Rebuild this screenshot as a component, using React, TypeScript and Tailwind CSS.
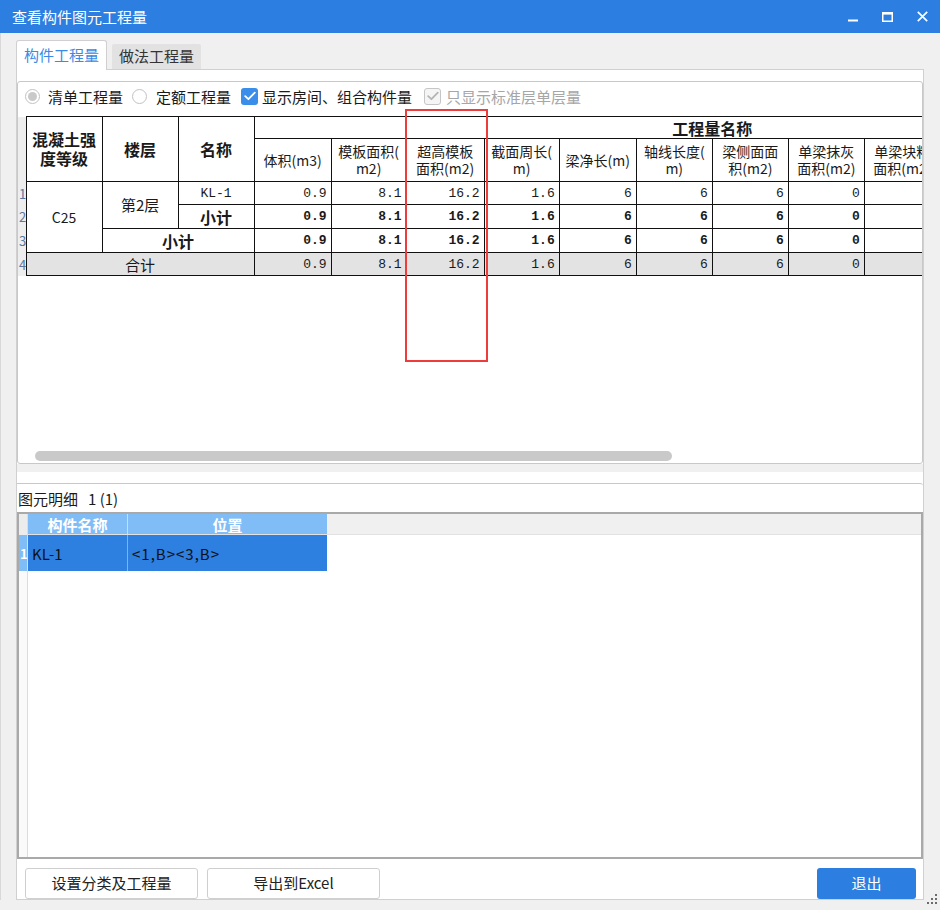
import React from 'react';

type Col = { w: string; head: string[] };

// columns under 工程量名称 (the last three sit beyond the visible edge)
const qtyCols: Col[] = [
    { w: 'w-[77px]', head: ['体积(m3)'] },
    { w: 'w-[75px]', head: ['模板面积(', 'm2)'] },
    { w: 'w-[78px]', head: ['超高模板', '面积(m2)'] },
    { w: 'w-[75px]', head: ['截面周长(', 'm)'] },
    { w: 'w-[77px]', head: ['梁净长(m)'] },
    { w: 'w-[76px]', head: ['轴线长度(', 'm)'] },
    { w: 'w-[76px]', head: ['梁侧面面', '积(m2)'] },
    { w: 'w-[76px]', head: ['单梁抹灰', '面积(m2)'] },
    { w: 'w-[76px]', head: ['单梁块料', '面积(m2)'] },
    { w: 'w-[77px]', head: ['单梁块料', '厚度(m)'] },
    { w: 'w-[76px]', head: ['梁侧模板', '面积(m2)'] },
    { w: 'w-[77px]', head: ['梁底模板', '面积(m2)'] },
];

const values = ['0.9', '8.1', '16.2', '1.6', '6', '6', '6', '0', '', '', '', ''];

const cell = 'border border-[#111] p-0';
const rowNum = 'p-0 bg-[#eeeeee] text-[13px] leading-none text-[#5877a3] text-left pl-[1px] align-middle';

const ValueCells: React.FC<{ bold?: boolean }> = ({ bold }) => (
    <>
        {values.map((v, i) => (
            <td
                key={i}
                className={`${cell} text-right pr-[4px] font-['Liberation_Mono',monospace] text-[13px] leading-none ${bold ? 'font-bold' : ''}`}
            >
                {v}
            </td>
        ))}
    </>
);

const Radio: React.FC<{ checked?: boolean }> = ({ checked }) => (
    <span className="w-[15px] h-[15px] rounded-full border border-[#c2c2c2] bg-white flex items-center justify-center shrink-0">
        {checked && <span className="w-[9px] h-[9px] rounded-full bg-[#c9c9c9]" />}
    </span>
);

const Check: React.FC<{ disabled?: boolean }> = ({ disabled }) => (
    <span
        className={`w-[17px] h-[17px] rounded-[3px] flex items-center justify-center shrink-0 ${
            disabled ? 'border border-[#c6c6c6] bg-[#f5f5f5]' : 'bg-[#3a8de8]'
        }`}
    >
        <svg width="12" height="10" viewBox="0 0 12 10" fill="none">
            <path
                d="M1.2 5.2 L4.4 8.2 L10.8 1.6"
                stroke={disabled ? '#b5b5b5' : '#ffffff'}
                strokeWidth="1.8"
                strokeLinecap="round"
                strokeLinejoin="round"
            />
        </svg>
    </span>
);

export default function App() {
    return (
        <div className="relative w-[940px] h-[910px] overflow-hidden bg-[#f0f0f0] font-['Noto_Sans_CJK_SC',sans-serif] text-[#1a1a1a]">
            <header className="h-[33px] bg-[#2c7fe0] flex items-center justify-between pl-[12px] text-white">
                <span className="text-[15px] leading-none">查看构件图元工程量</span>
                <div className="flex h-full">
                    <button type="button" className="w-[35px] h-full flex items-center justify-center" title="最小化">
                        <svg width="10" height="10" viewBox="0 0 10 10"><rect x="0" y="7.5" width="10" height="2" fill="#fff" /></svg>
                    </button>
                    <button type="button" className="w-[35px] h-full flex items-center justify-center" title="最大化">
                        <svg width="11" height="10" viewBox="0 0 11 10" fill="none">
                            <rect x="0.75" y="0.75" width="9.5" height="8.5" stroke="#fff" strokeWidth="1.5" />
                            <rect x="0" y="0" width="11" height="2.6" fill="#fff" />
                        </svg>
                    </button>
                    <button type="button" className="w-[35px] h-full flex items-center justify-center" title="关闭">
                        <svg width="11" height="11" viewBox="0 0 11 11" fill="none">
                            <path d="M0.8 0.8 L10.2 10.2 M10.2 0.8 L0.8 10.2" stroke="#fff" strokeWidth="1.7" />
                        </svg>
                    </button>
                </div>
            </header>

            <div className="flex flex-col pl-[15px] pr-[16px] pt-[7px] border-l border-[#d8d8d8]">
                {/* tabs */}
                <div className="flex items-end h-[29px]">
                    <div className="relative z-10 -mb-px h-[30px] w-[91px] bg-white border border-b-0 border-[#d0d0d0] rounded-t-[3px] flex items-center justify-center text-[15px] text-[#3a8ae6]">
                        构件工程量
                    </div>
                    <div className="ml-[5px] h-[25px] w-[89px] bg-[#e2e2e2] rounded-t-[2px] flex items-center justify-center text-[15px] text-[#333]">
                        做法工程量
                    </div>
                </div>

                <div className="h-[831px] bg-white border border-[#d0d0d0] flex flex-col pt-[11px]">
                    {/* upper: quantities table */}
                    <div className="h-[383px] border border-[#c8c8c8] rounded-[3px] flex flex-col overflow-hidden">
                        <div className="h-[28px] flex items-center pl-[7px] text-[15px] leading-none">
                            <Radio checked />
                            <span className="ml-[8px]">清单工程量</span>
                            <span className="ml-[9px]"><Radio /></span>
                            <span className="ml-[9px]">定额工程量</span>
                            <span className="ml-[10px]"><Check /></span>
                            <span className="ml-[4px]">显示房间、组合构件量</span>
                            <span className="ml-[12px]"><Check disabled /></span>
                            <span className="ml-[5px] text-[#a6a6a6]">只显示标准层单层量</span>
                        </div>

                        <div className="mt-[6px] overflow-hidden">
                            <table className="table-fixed border-collapse w-[1153px] text-center">
                                <colgroup>
                                    <col className="w-[8px]" />
                                    <col className="w-[76px]" />
                                    <col className="w-[76px]" />
                                    <col className="w-[76px]" />
                                    {qtyCols.map((c, i) => (
                                        <col key={i} className={c.w} />
                                    ))}
                                </colgroup>
                                <thead>
                                    <tr className="h-[22px]">
                                        <th rowSpan={2} className="p-0 bg-[#eeeeee]" />
                                        <th rowSpan={2} className={`${cell} text-[16px] leading-[19px] font-bold`}>
                                            混凝土强<br />度等级
                                        </th>
                                        <th rowSpan={2} className={`${cell} text-[16px] leading-none font-bold`}>楼层</th>
                                        <th rowSpan={2} className={`${cell} text-[16px] leading-none font-bold`}>名称</th>
                                        <th colSpan={qtyCols.length} className={`${cell} text-[16px] leading-none font-bold`}>
                                            工程量名称
                                        </th>
                                    </tr>
                                    <tr className="h-[43px]">
                                        {qtyCols.map((c, i) => (
                                            <th key={i} className={`${cell} text-[14px] leading-[17px] font-normal whitespace-nowrap overflow-hidden`}>
                                                {c.head.map((line, j) => (
                                                    <div key={j}>{line}</div>
                                                ))}
                                            </th>
                                        ))}
                                    </tr>
                                </thead>
                                <tbody>
                                    <tr className="h-[23px]">
                                        <td className={rowNum}>1</td>
                                        <td rowSpan={3} className={`${cell} text-[14px]`}>C25</td>
                                        <td rowSpan={2} className={`${cell} text-[15px]`}>第2层</td>
                                        <td className={`${cell} font-['Liberation_Mono',monospace] text-[13px] leading-none`}>KL-1</td>
                                        <ValueCells />
                                    </tr>
                                    <tr className="h-[24px]">
                                        <td className={rowNum}>2</td>
                                        <td className={`${cell} text-[16px] leading-none font-bold`}>小计</td>
                                        <ValueCells bold />
                                    </tr>
                                    <tr className="h-[24px]">
                                        <td className={rowNum}>3</td>
                                        <td colSpan={2} className={`${cell} text-[16px] leading-none font-bold`}>小计</td>
                                        <ValueCells bold />
                                    </tr>
                                    <tr className="h-[23px] bg-[#e3e3e3]">
                                        <td className={rowNum}>4</td>
                                        <td colSpan={3} className={`${cell} text-[15px] leading-none`}>合计</td>
                                        <ValueCells />
                                    </tr>
                                </tbody>
                            </table>
                        </div>

                        <div className="flex-1 flex items-end pb-[2px] pl-[17px]">
                            <div className="w-[637px] h-[10px] rounded-full bg-[#c9c9c9]" />
                        </div>
                    </div>

                    {/* splitter */}
                    <div className="h-[8px] bg-[#f0f0f0]" />
                    <div className="h-[11px]" />

                    {/* lower: element detail */}
                    <div className="border-t border-[#c8c8c8] rounded-tr-[3px]">
                        <div className="h-[28px] flex items-center pl-[1px] text-[15px] leading-none">
                            图元明细<span className="ml-[10px]">1 (1)</span>
                        </div>
                        <div className="h-[347px] border-2 border-[#a9a9a9] flex">
                            <div className="w-[9px] border-r border-[#dcdcdc] bg-[#fafafa] flex flex-col">
                                <div className="h-[21px] bg-[#ececec]" />
                                <div className="h-[36px] bg-[#80bdf7] flex items-center pl-[1px] text-[13px] font-bold text-white leading-none">1</div>
                            </div>
                            <div className="flex-1 flex flex-col">
                                <div className="h-[21px] flex bg-[#f0f0f0] border-b border-[#e2e2e2]">
                                    <div className="w-[100px] bg-[#80bdf7] border-r border-[#c5def8] flex items-center justify-center text-[15px] font-bold text-white leading-none">
                                        构件名称
                                    </div>
                                    <div className="w-[199px] bg-[#80bdf7] flex items-center justify-center text-[15px] font-bold text-white leading-none">
                                        位置
                                    </div>
                                </div>
                                <div className="h-[36px] flex">
                                    <div className="w-[100px] bg-[#2d7fe0] border-r border-[#7fb2ee] flex items-center pl-[4px] text-[15px] text-[#111] leading-none">
                                        KL-1
                                    </div>
                                    <div className="w-[199px] bg-[#2d7fe0] flex items-center pl-[4px] text-[15px] tracking-[1px] text-[#111] leading-none">
                                        &lt;1,B&gt;&lt;3,B&gt;
                                    </div>
                                </div>
                            </div>
                        </div>
                    </div>

                    {/* buttons */}
                    <div className="mt-[9px] h-[31px] flex pl-[8px] pr-[7px]">
                        <button type="button" className="w-[173px] h-full bg-white border border-[#cfcfcf] rounded-[3px] text-[15px] text-[#222]">
                            设置分类及工程量
                        </button>
                        <button type="button" className="ml-[9px] w-[173px] h-full bg-white border border-[#cfcfcf] rounded-[3px] text-[15px] text-[#222]">
                            导出到Excel
                        </button>
                        <div className="flex-1" />
                        <button type="button" className="w-[99px] h-full bg-[#2c7fe0] rounded-[3px] text-[15px] text-white">
                            退出
                        </button>
                    </div>
                </div>
            </div>

            {/* resize grip */}
            <svg className="absolute left-[925px] top-[891px]" width="14" height="16" viewBox="0 0 14 16" fill="#6b6b6b">
                <rect x="10" y="3" width="2" height="2" />
                <rect x="6" y="7" width="2" height="2" />
                <rect x="10" y="7" width="2" height="2" />
                <rect x="2" y="11" width="2" height="2" />
                <rect x="6" y="11" width="2" height="2" />
                <rect x="10" y="11" width="2" height="2" />
            </svg>

            {/* red highlight box */}
            <div className="absolute left-[405px] top-[109px] w-[83px] h-[253px] border-2 border-[#ee3b3b]" />
        </div>
    );
}
